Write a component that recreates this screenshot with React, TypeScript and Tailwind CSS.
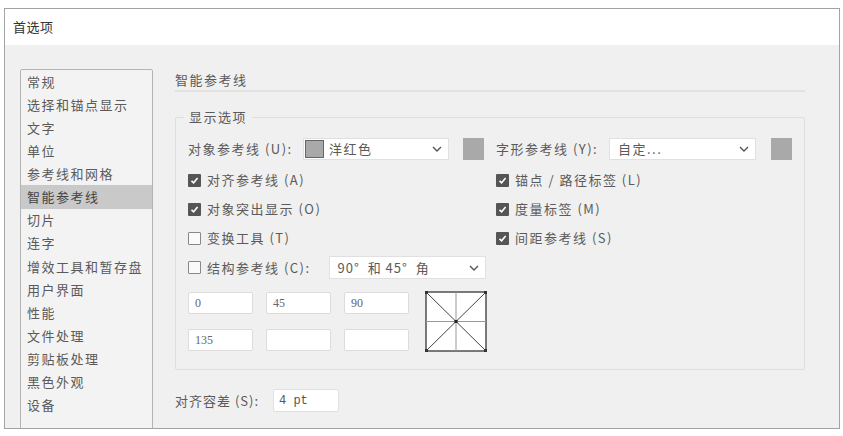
import React from 'react';

const font = { fontFamily: '"Noto Sans CJK SC", "Noto Sans", sans-serif' };

const navItems = [
  '常规',
  '选择和锚点显示',
  '文字',
  '单位',
  '参考线和网格',
  '智能参考线',
  '切片',
  '连字',
  '增效工具和暂存盘',
  '用户界面',
  '性能',
  '文件处理',
  '剪贴板处理',
  '黑色外观',
  '设备',
];

function Chevron() {
  return (
    <svg width="10" height="6" viewBox="0 0 10 6" className="shrink-0">
      <path d="M1 1 L5 5 L9 1" fill="none" stroke="#555" strokeWidth="1.4" />
    </svg>
  );
}

function Check({ checked, label }: { checked: boolean; label: string }) {
  return (
    <div className="flex items-center h-[20px] gap-[6px]">
      {checked ? (
        <div className="w-[13px] h-[13px] bg-[#555] rounded-[1px] flex items-center justify-center">
          <svg width="9" height="9" viewBox="0 0 9 9">
            <path d="M1.5 4.8 L3.6 6.8 L7.6 2" fill="none" stroke="#fff" strokeWidth="1.6" />
          </svg>
        </div>
      ) : (
        <div className="w-[13px] h-[13px] border border-[#888] bg-[#fafafa] rounded-[1px]" />
      )}
      <span className="tracking-[1.5px]">{label}</span>
    </div>
  );
}

function Field({ value }: { value?: string }) {
  return (
    <div
      className="w-[65px] h-[22px] bg-white border border-[#dcdcdc] rounded-[2px] pl-[6px] flex items-center text-[12px] text-[#666]"
      style={{ fontFamily: '"Liberation Serif", serif' }}
    >
      {value}
    </div>
  );
}

function AngleDiagram() {
  return (
    <svg width="62" height="61" viewBox="0 0 62 61">
      <rect x="1" y="1" width="60" height="59" fill="#fff" stroke="#444" strokeWidth="1.4" />
      <line x1="31" y1="1" x2="31" y2="60" stroke="#999" strokeWidth="1" />
      <line x1="1" y1="30.5" x2="61" y2="30.5" stroke="#999" strokeWidth="1" />
      <line x1="1" y1="1" x2="61" y2="60" stroke="#444" strokeWidth="1" />
      <line x1="61" y1="1" x2="1" y2="60" stroke="#444" strokeWidth="1" />
      <rect x="0" y="0" width="3" height="3" fill="#333" />
      <rect x="59" y="0" width="3" height="3" fill="#333" />
      <rect x="0" y="58" width="3" height="3" fill="#333" />
      <rect x="59" y="58" width="3" height="3" fill="#333" />
      <rect x="29.5" y="29" width="3" height="3" fill="#222" />
    </svg>
  );
}

export default function App() {
  return (
    <div className="w-[843px] h-[436px] bg-white pt-[8px] pl-[4px] text-[13px] text-[#5a5a5a]" style={font}>
      <div className="w-[836px] h-[421px] border border-[#a3a3a3] flex flex-col overflow-hidden">
        <div className="h-[36px] bg-white flex items-center pl-[8px] text-[#333] tracking-[0.5px] shrink-0">
          首选项
        </div>
        <div className="flex-1 bg-[#f0f0f0] flex pl-[15px] pt-[24px]">
          {/* sidebar */}
          <div className="w-[133px] h-[400px] border border-[#b4b4b4] rounded-[2px] bg-[#f3f3f3] shrink-0">
            {navItems.map((item, i) => (
              <div
                key={item}
                className={`h-[23.1px] flex items-center pl-[6px] tracking-[1.5px] ${
                  i === 5 ? 'bg-[#c9c9c9] text-[#444]' : ''
                }`}
              >
                {item}
              </div>
            ))}
          </div>

          {/* content */}
          <div className="ml-[22px] w-[630px] flex flex-col">
            <div className="h-[18px] tracking-[1.5px] leading-[18px] mt-[2px]">智能参考线</div>
            <div className="h-[2px] bg-[#e2e2e2] mt-[1px]" />

            {/* group box */}
            <div className="relative mt-[25px] h-[253px] border border-[#dedede] rounded-[2px] flex px-[12px] pt-[20px]">
              <div className="absolute -top-[10px] left-[8px] px-[5px] bg-[#f0f0f0] tracking-[1.5px] leading-[18px]">
                显示选项
              </div>

              {/* left column */}
              <div className="w-[310px] flex flex-col">
                <div className="flex items-center h-[22px]">
                  <span className="w-[115px] tracking-[1.5px]">对象参考线 (U):</span>
                  <div className="w-[146px] h-[22px] bg-white border border-[#e0e0e0] flex items-center pr-[6px] pl-[1px]">
                    <div className="w-[19px] h-[18px] bg-[#a9a9a9] border border-[#666]" />
                    <span className="ml-[5px] flex-1 tracking-[1.5px]">洋红色</span>
                    <Chevron />
                  </div>
                  <div className="ml-[14px] w-[21px] h-[22px] bg-[#a9a9a9]" />
                </div>
                <div className="mt-[10px]">
                  <Check checked label="对齐参考线 (A)" />
                </div>
                <div className="mt-[9px]">
                  <Check checked label="对象突出显示 (O)" />
                </div>
                <div className="mt-[9px]">
                  <Check checked={false} label="变换工具 (T)" />
                </div>
                <div className="mt-[8px] flex items-center h-[23px]">
                  <Check checked={false} label="结构参考线 (C):" />
                  <div className="ml-[18px] w-[157px] h-[23px] bg-white border border-[#e0e0e0] flex items-center pl-[8px] pr-[6px]">
                    <span className="flex-1 tracking-[1px] whitespace-pre">90°  和 45°  角</span>
                    <Chevron />
                  </div>
                </div>
                <div className="mt-[12px] flex gap-[16px]">
                  <div className="grid grid-cols-3 gap-x-[13px] gap-y-[14px] pt-[1px]">
                    <Field value="0" />
                    <Field value="45" />
                    <Field value="90" />
                    <Field value="135" />
                    <Field />
                    <Field />
                  </div>
                  <AngleDiagram />
                </div>
              </div>

              {/* right column */}
              <div className="flex flex-col">
                <div className="flex items-center h-[22px]">
                  <span className="w-[113px] tracking-[1.5px]">字形参考线 (Y):</span>
                  <div className="w-[147px] h-[22px] bg-white border border-[#e0e0e0] flex items-center pl-[8px] pr-[6px]">
                    <span className="flex-1 tracking-[1.5px]">自定...</span>
                    <Chevron />
                  </div>
                  <div className="ml-[15px] w-[21px] h-[22px] bg-[#a9a9a9]" />
                </div>
                <div className="mt-[10px]">
                  <Check checked label="锚点 / 路径标签 (L)" />
                </div>
                <div className="mt-[9px]">
                  <Check checked label="度量标签 (M)" />
                </div>
                <div className="mt-[9px]">
                  <Check checked label="间距参考线 (S)" />
                </div>
              </div>
            </div>

            {/* tolerance */}
            <div className="mt-[19px] flex items-center h-[23px]">
              <span className="w-[98px] tracking-[1px]">对齐容差 (S):</span>
              <div
                className="w-[66px] h-[23px] bg-white border border-[#e0e0e0] rounded-[2px] pl-[5px] flex items-center text-[12px] text-[#555]"
                style={{ fontFamily: '"Liberation Mono", monospace' }}
              >
                4 pt
              </div>
            </div>
          </div>
        </div>
      </div>
    </div>
  );
}
